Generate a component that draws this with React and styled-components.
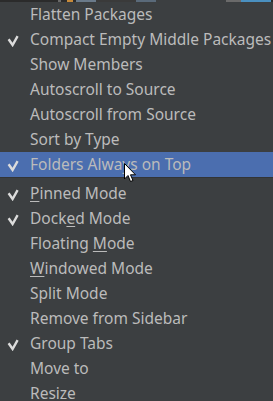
import React from "react";
import styled, { createGlobalStyle } from "styled-components";

const Global = createGlobalStyle`
  html, body { margin: 0; padding: 0; background: #3c3f41; overflow: hidden; }
  #root { width: 273px; height: 401px; overflow: hidden; }
`;

const Page = styled.div`
  position: relative;
  width: 273px;
  height: 401px;
  background: #3c3f41;
  font-family: "Noto Sans", "Open Sans", sans-serif;
`;

const EditorStrip = styled.div`
  height: 2px;
  display: flex;
  background: #2b2b2b;
`;

const StripBit = styled.div`
  width: ${(p) => p.w}px;
  background: ${(p) => p.c};
`;

const Menu = styled.div`
  display: flex;
  flex-direction: column;
  width: 300px;
`;

const Row = styled.div`
  height: 25px;
  display: flex;
  align-items: center;
  background: ${(p) => (p.active ? "#4b6eaf" : "transparent")};
  color: #bbbbbb;
  font-size: 15.5px;
  white-space: nowrap;
`;

const CheckCell = styled.div`
  width: 30px;
  height: 25px;
  display: flex;
  align-items: center;
  justify-content: flex-start;
  padding-left: 7px;
  padding-top: 3px;
  box-sizing: border-box;
`;

const Label = styled.span`
  line-height: 25px;
`;

const Mn = styled.span`
  text-decoration: underline;
  text-underline-offset: 2px;
  text-decoration-thickness: 1px;
`;

const Separator = styled.div`
  height: 4px;
  border-top: 1px solid #323436;
  box-sizing: border-box;
`;

const Cursor = styled.svg`
  position: absolute;
  left: 124px;
  top: 163px;
`;

const Check = () => (
  <svg width="12" height="12" viewBox="0 0 12 12">
    <path d="M1.6 4.2 L5.6 10 L10.6 1.2" fill="none" stroke="#dcdcdc" strokeWidth="2.4" strokeLinecap="butt" strokeLinejoin="miter" />
  </svg>
);

const Item = ({ checked, active, children }) => (
  <Row active={active}>
    <CheckCell>{checked ? <Check /> : null}</CheckCell>
    <Label>{children}</Label>
  </Row>
);

const strip = [
  [58, "#2b2b2b"], [3, "#6a6a6a"], [6, "#2b2b2b"], [6, "#c78a3a"], [3, "#2b2b2b"],
  [20, "#6a7a8a"], [40, "#3a3a3a"], [20, "#5a6a7a"], [70, "#3c3f41"], [15, "#6a6a6a"],
  [30, "#4a90c0"], [2, "#2b2b2b"]
];

export default function App() {
  return (
    <Page>
      <Global />
      <EditorStrip>
        {strip.map(([w, c], i) => (
          <StripBit key={i} w={w} c={c} />
        ))}
      </EditorStrip>
      <Menu>
        <Item>Flatten Packages</Item>
        <Item checked>Compact Empty Middle Packages</Item>
        <Item>Show Members</Item>
        <Item>Autoscroll to Source</Item>
        <Item>Autoscroll from Source</Item>
        <Item>Sort by Type</Item>
        <Item checked active>Folders Always on Top</Item>
        <Separator />
        <Item checked><Mn>P</Mn>inned Mode</Item>
        <Item checked>Dock<Mn>e</Mn>d Mode</Item>
        <Item>Floating <Mn>M</Mn>ode</Item>
        <Item><Mn>W</Mn>indowed Mode</Item>
        <Item>Split Mode</Item>
        <Item>Remove from Sidebar</Item>
        <Item checked>Group Tabs</Item>
        <Item>Move to</Item>
        <Item>Resize</Item>
      </Menu>
      <Cursor width="13" height="20" viewBox="0 0 13 20">
        <path d="M0.5 0.5 L0.5 16 L4 12.5 L6.5 18.5 L9 17.5 L6.5 11.8 L11.5 11.8 Z" fill="#ffffff" stroke="#000000" strokeWidth="1" strokeLinejoin="miter" />
      </Cursor>
    </Page>
  );
}
